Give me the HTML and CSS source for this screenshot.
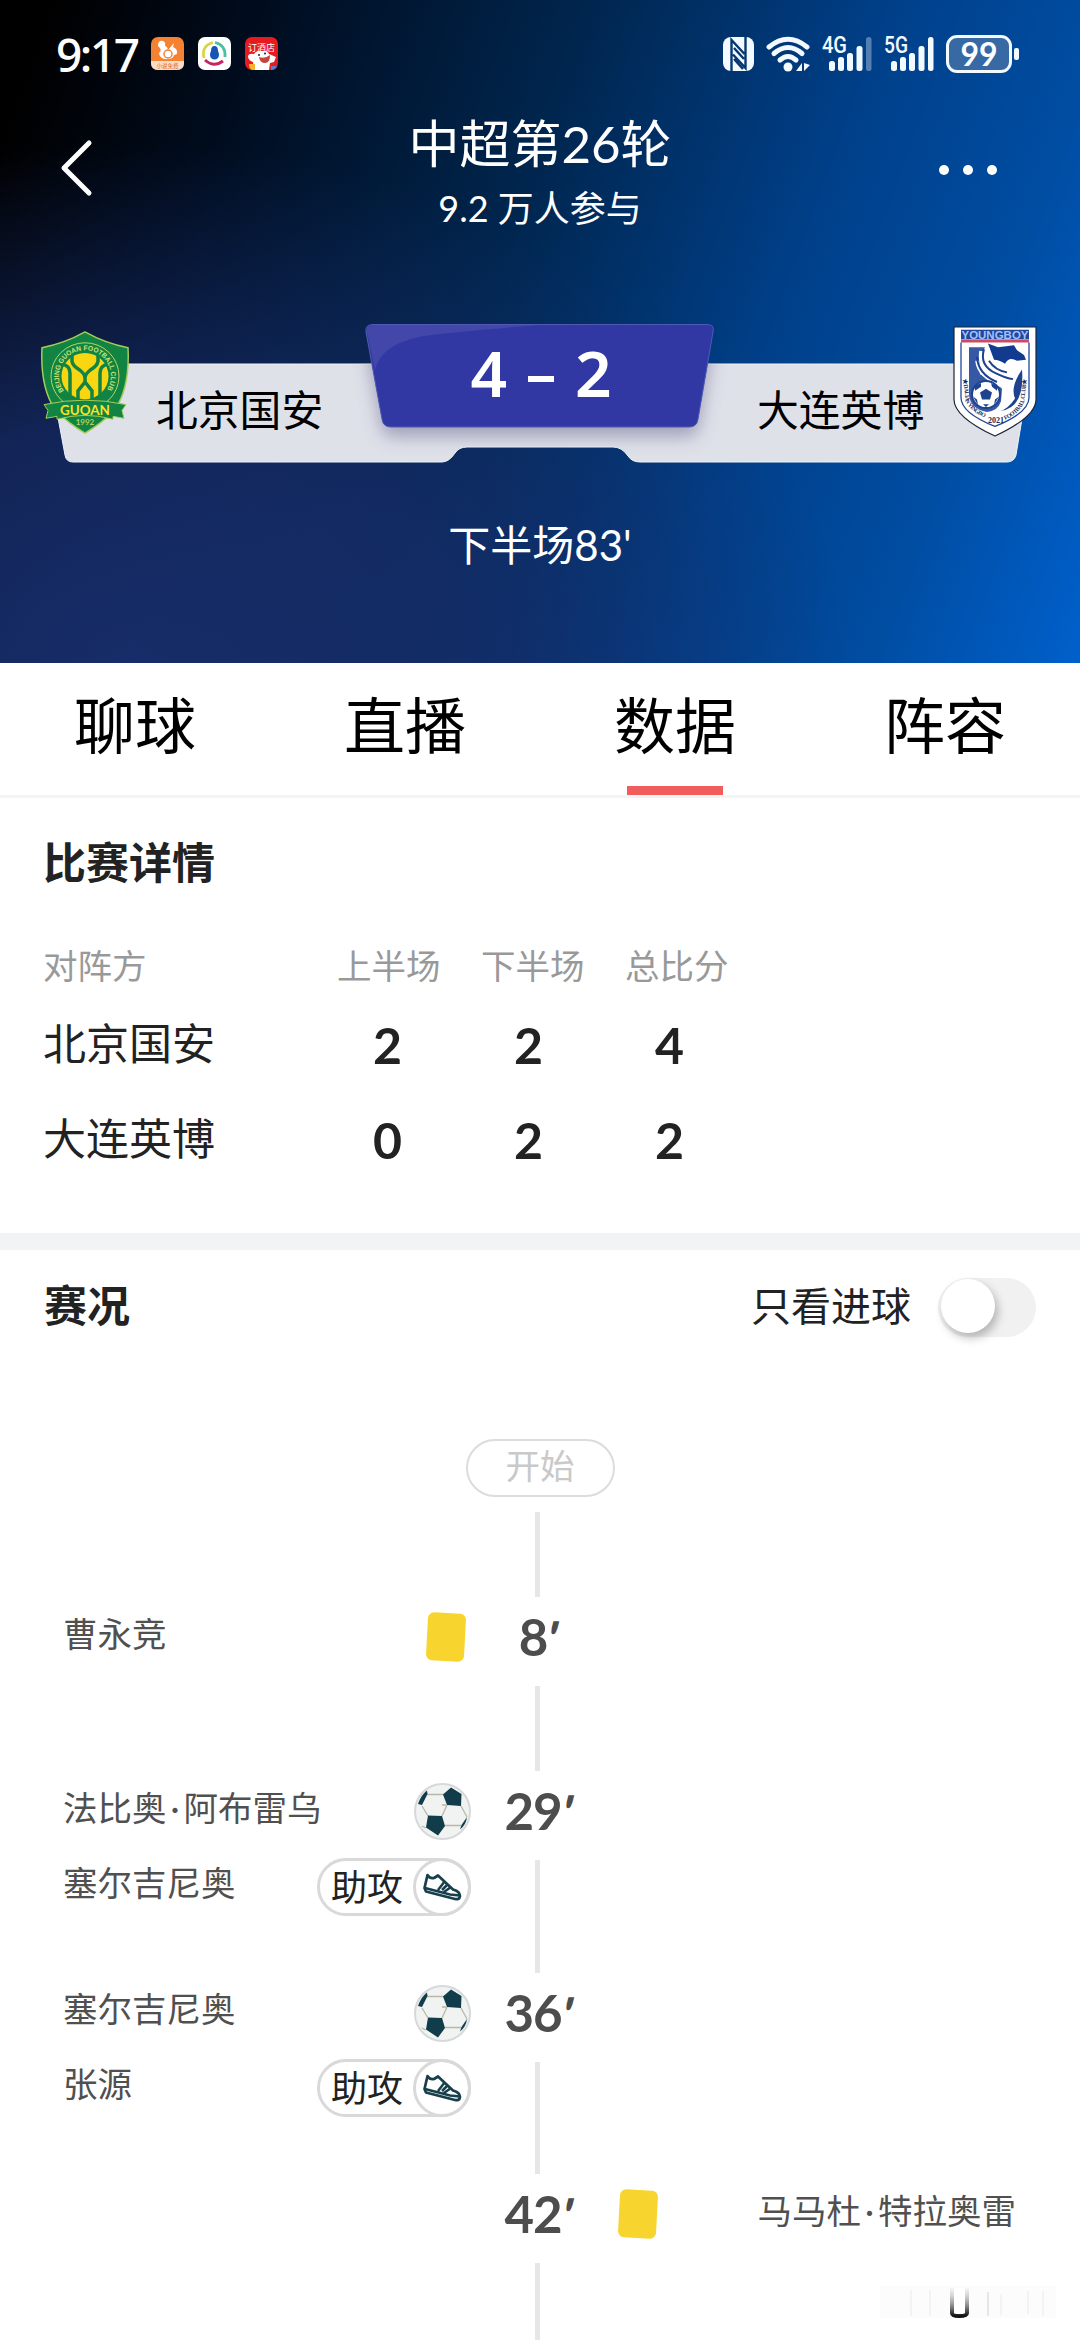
FILE: index.html
```html
<!DOCTYPE html>
<html lang="zh-CN">
<head>
    <meta charset="UTF-8">
    <meta name="viewport" content="width=device-width, initial-scale=1.0">
    <title>中超第26轮</title>
    <link rel="stylesheet" href="styles.css">
</head>
<body>
    <!-- símbolos reutilizados na linha do tempo -->
    <svg class="defs" width="0" height="0">
        <symbol id="ball" viewBox="0 0 57 57">
            <circle cx="28.5" cy="28.5" r="27.5" fill="#f1f3f3" stroke="#d6d8d9" stroke-width="2"/>
            <path d="M13 11.500H30M33 22L28 33M8 23L14 33M31 42.500H47M47 23L53 34M12 45L8 43M32 22H28" fill="none" stroke="#b9b7a5" stroke-width="1.300"/>
            <path d="M37 4.500L47.500 11L47 23L33 22L29 11.500Z" fill="#113c49"/>
            <path d="M14 32.500L28 33L31 43L24 52.500L12 44.500Z" fill="#113c49"/>
            <path d="M4 21Q7 12 13 7.500L13.500 11L8 22Z" fill="#113c49"/>
            <path d="M53 34Q52 42 46 46.500L47.500 42Z" fill="#113c49"/>
        </symbol>
        <symbol id="shoe" viewBox="0 0 40 30">
            <path d="M5.500 3Q8 7 12 6L16 3.500L31 17.500Q38 19.500 38 24Q37.500 28 33 27L4 19.500L2.500 16Z" fill="#fff" stroke="#173f4c" stroke-width="2.700" stroke-linejoin="round"/>
            <path d="M3 16L28 22.500L38 23.500M16 18L23 9M22 20L29 15M20 18L26 12" fill="none" stroke="#173f4c" stroke-width="2.500"/>
        </symbol>
    </svg>

    <header class="header">
        <div class="statusbar">
            <div class="status-left">
                <span class="clock">9:17</span>
                <svg class="app" viewBox="0 0 33 33">
                    <rect width="33" height="33" rx="7" fill="#f58232"/>
                    <path d="M0 24H33V26Q33 33 26 33H7Q0 33 0 26Z" fill="#fbdcc6"/>
                    <path d="M7 9Q7 3 12 4Q15 5 14 9Q16 9 17 13L23 6L22 10Q27 12 26 17L23 18Q22 22 17 22Q9 23 8 16Q12 13 7 9Z" fill="#fff"/>
                    <circle cx="17" cy="17" r="4" fill="none" stroke="#f58232" stroke-width="1.500"/>
                    <text x="16.500" y="31" text-anchor="middle" font-size="5.500" fill="#e06a24">小说免费</text>
                </svg>
                <svg class="app" viewBox="0 0 33 33">
                    <rect width="33" height="33" rx="7" fill="#fff"/>
                    <path d="M6 21Q3 9 15 5.500" fill="none" stroke="#d8d648" stroke-width="2.800"/>
                    <path d="M17 5.500Q28 8 27 20" fill="none" stroke="#4cc0a4" stroke-width="2.800"/>
                    <path d="M7 23Q16 31 25 24" fill="none" stroke="#c32762" stroke-width="3"/>
                    <path d="M16.500 9Q20 9 20 14Q22 18 20 21Q16.500 24 13 21Q11 18 13 14Q13 9 16.500 9Z" fill="#1655b4"/>
                </svg>
                <svg class="app" viewBox="0 0 33 33">
                    <rect width="33" height="33" rx="7" fill="#e61b20"/>
                    <text x="16.500" y="13.500" text-anchor="middle" font-size="9" fill="#fff">订酒店</text>
                    <path d="M3 20Q3 16 9 17Q12 13 17 14Q22 13 24 17L31 20L29 25L25 26L24 33H9L8 25Q4 24 3 20Z" fill="#fff"/>
                    <path d="M14 20Q20 22 25 18Q25 26 20 26Q15 26 14 20Z" fill="#c6443e"/>
                    <circle cx="14" cy="18" r="1" fill="#222"/><circle cx="20" cy="16.500" r="1" fill="#222"/>
                    <path d="M4 27H10V33H7Q4 32 4 27Z" fill="#f3b32f"/>
                    <path d="M26 29H32Q31 33 26 33Z" fill="#5d7cc4"/>
                </svg>
            </div>
            <div class="status-right">
                <svg width="31" height="34" viewBox="0 0 31 34">
                    <rect width="31" height="34" rx="8" fill="#f2f9ff"/>
                    <path d="M8.500 34V3L21.500 17M22.500 0V31L10 17.500M11 11L21 22M11 22L20 32" fill="none" stroke="#06386f" stroke-width="2.400"/>
                </svg>
                <svg class="wifi" width="44" height="36" viewBox="0 0 44 36">
                    <g fill="none" stroke="#f2f9ff" stroke-width="5" stroke-linecap="round">
                        <path d="M3 11Q22-4.500 41 11"/><path d="M8 17.500Q22 5.500 36 17.500"/><path d="M14 24Q22 17 30 24"/>
                    </g>
                    <circle cx="22" cy="31" r="4.500" fill="#f2f9ff"/>
                    <path d="M36 27V35H30ZM38 27V35L44 29Z" fill="#f2f9ff"/>
                </svg>
                <svg class="sig sig4" width="51" height="46" viewBox="0 -5 51 46">
                    <text class="net" x="0" y="17" textLength="25" lengthAdjust="spacingAndGlyphs">4G</text>
                    <g fill="#f2f9ff"><rect x="7" y="25" width="6" height="10" rx="2.500"/><rect x="16" y="21" width="6" height="14" rx="2.500"/><rect x="25" y="17" width="6" height="18" rx="2.500"/><rect x="34.500" y="10" width="6" height="25" rx="2.500"/><rect x="44" y="1" width="5.500" height="34" rx="2.500" opacity=".35"/></g>
                </svg>
                <svg class="sig sig5" width="51" height="46" viewBox="0 -5 51 46">
                    <text class="net" x="0" y="17" textLength="24" lengthAdjust="spacingAndGlyphs">5G</text>
                    <g fill="#f2f9ff"><rect x="7" y="25" width="6" height="10" rx="2.500"/><rect x="16" y="21" width="6" height="14" rx="2.500"/><rect x="25" y="17" width="6" height="18" rx="2.500"/><rect x="34.500" y="10" width="6" height="25" rx="2.500"/><rect x="44" y="1" width="5.500" height="34" rx="2.500"/></g>
                </svg>
                <span class="battery">99</span><i class="nub"></i>
            </div>
        </div>

        <div class="nav">
            <svg class="back" width="33" height="58" viewBox="0 0 33 58"><path d="M29 4L4 29L29 54" fill="none" stroke="#fff" stroke-width="5" stroke-linecap="round" stroke-linejoin="round"/></svg>
            <div class="nav-title">
                <h1>中超第26轮</h1>
                <p>9.2 万人参与</p>
            </div>
            <div class="more"><i></i><i></i><i></i></div>
        </div>

        <div class="scoreboard">
            <svg class="plate" width="1080" height="160" viewBox="0 0 1080 160">
                <defs>
                    <filter id="sh" x="-10%" y="-10%" width="120%" height="150%"><feDropShadow dx="0" dy="9" stdDeviation="9" flood-color="#4a4a78" flood-opacity=".45"/></filter>
                    <clipPath id="barclip"><path d="M48 40H1031L1016 131Q1014 138 1007 138H640Q632 138 628 132Q622 123 613 123H467Q459 123 455 129Q449 138 442 138H73Q66 138 65 131Z"/></clipPath>
                </defs>
                <path d="M48 40H1031L1016 131Q1014 138 1007 138H640Q632 138 628 132Q622 123 613 123H467Q459 123 455 129Q449 138 442 138H73Q66 138 65 131Z" fill="#dfe1e9" stroke="#edf3fa" stroke-width="1"/>
                <g clip-path="url(#barclip)"><path d="M373 0H707Q715 0 713 8L698 95Q697 103 689 103H391Q383 103 382 95L366 8Q365 0 373 0Z" fill="#3138a4" filter="url(#sh)"/></g>
                <path d="M373 .5H707Q715 .5 713 8L698 95Q697 103 689 103H391Q383 103 382 95L366 8Q365 .5 373 .5Z" fill="#3138a4" stroke="#5159b5" stroke-width="1"/>
                <path d="M373 1H540Q476 6 440 10Q382 15 375 46L367 8Q366 1 373 1Z" fill="#4247a9"/>
            </svg>
            <svg class="crest" width="90" height="104" viewBox="0 0 90 106" preserveAspectRatio="none">
                <path d="M45 1Q66 13 88 17Q90 57 75 80Q62 94 45 104Q28 94 15 80Q0 57 2 17Q24 13 45 1Z" fill="#118443" stroke="#a5cc57" stroke-width="1.500"/>
                <circle cx="45" cy="46" r="34" fill="#118443" stroke="#b9d65e" stroke-width="1"/>
                <circle cx="45" cy="46" r="23.500" fill="#f8d712"/>
                <path d="M32 20V31Q33 36 40 40Q45 44 45 48Q45 44 50 40Q57 36 58 31V20M22 34Q30 35 30 43V68M68 34Q60 35 60 43V68M45 46V53M38 70V61L45 52L52 61V70" fill="none" stroke="#118443" stroke-width="3.500"/>
                <path id="arc1" d="M24 61A26 26 0 1 1 66 61" fill="none"/>
                <text font-family="Liberation Sans" font-size="7" font-weight="700" fill="#cde477"><textPath href="#arc1" textLength="112" lengthAdjust="spacingAndGlyphs">BEIJING GUOAN FOOTBALL CLUB</textPath></text>
                <path d="M4 75Q45 66 86 75L82 81L84 89L73 87V90Q45 82 17 90V87L6 89L8 81Z" fill="#118443" stroke="#a5cc57" stroke-width="1"/>
                <text x="45" y="86" text-anchor="middle" font-size="14" font-weight="700" textLength="50" lengthAdjust="spacingAndGlyphs" fill="#f8e32a">GUOAN</text>
                <text x="45" y="96" text-anchor="middle" font-size="8" font-weight="700" fill="#b5d45c">1992</text>
            </svg>
            <span class="team home">北京国安</span>
            <span class="score"><b>4</b><i></i><b>2</b></span>
            <span class="team away">大连英博</span>
            <svg class="crest away-crest" width="84" height="112" viewBox="0 0 84 116" preserveAspectRatio="none">
                <path d="M1 1H83V76Q83 94 42 114Q1 94 1 76Z" fill="#fff" stroke="#1d2434" stroke-width="1.200"/>
                <path d="M8 4H76V14H8Z" fill="#21479c"/>
                <path d="M8 14.500H76V17H8Z" fill="#cc4b64"/>
                <text x="42" y="13" text-anchor="middle" font-family="Liberation Sans" font-size="11" font-weight="700" textLength="67" lengthAdjust="spacingAndGlyphs" fill="#a4c2ff">YOUNGBOY</text>
                <path d="M8 17V74Q8 90 42 104Q76 90 76 74V17" fill="none" stroke="#21479c" stroke-width="1.300"/>
                <path d="M16 22H32Q24 36 27 50L42 58L49 65L48 78Q45 88 34 89Q17 86 16 71Z" fill="#3658a5"/>
                <path d="M35 18L45 22L61 20L64 25L71 30L73 35L64 36Q56 31 52 39Q46 35 41 35Z" fill="#123b8f"/>
                <path d="M34 22Q29 41 44 48Q57 53 67 52M28 26Q25 46 44 55Q54 60 67 54M24 36Q25 52 49 62" fill="none" stroke="#fff" stroke-width="3.500"/>
                <path d="M31 24Q26 41 43 49Q53 54 60 55M24 32Q25 50 44 58M36 36Q42 46 54 48" fill="none" stroke="#1d438f" stroke-width="2"/>
                <path d="M69 45Q57 63 62 75Q55 86 47 88Q72 85 69 45Z" fill="#1d438f"/>
                <circle cx="33" cy="71" r="14" fill="#fff" stroke="#1d438f" stroke-width="2"/>
                <path d="M33 65L39 69L37 76H29L27 69ZM22 62L28 59L28 63L22 67ZM38 59L44 62L44 67L39 63ZM20 73L24 76L25 82ZM46 73L42 76L41 82ZM30 81H36L33 84Z" fill="#1d438f"/>
                <path id="arc2" d="M10 55L13 79Q20 91 36 96" fill="none"/>
                <path id="arc3" d="M52 97Q66 91 71 79L74 53" fill="none"/>
                <g font-family="Liberation Serif" font-size="6" font-weight="700" fill="#1d2a55">
                    <text><textPath href="#arc2" textLength="49">★DALIAN YINGBO</textPath></text>
                    <text x="35" y="100" font-size="8">2021</text>
                    <text><textPath href="#arc3" textLength="51">FOOTBALL CLUB★</textPath></text>
                </g>
            </svg>
        </div>
        <div class="period">下半场83'</div>
    </header>

    <nav class="tabs">
        <a>聊球</a>
        <a>直播</a>
        <a class="active">数据</a>
        <a>阵容</a>
    </nav>

    <section class="detail">
        <h2>比赛详情</h2>
        <div class="table">
            <div class="row head"><span>对阵方</span><span>上半场</span><span>下半场</span><span>总比分</span></div>
            <div class="row"><span>北京国安</span><b>2</b><b>2</b><b>4</b></div>
            <div class="row"><span>大连英博</span><b>0</b><b>2</b><b>2</b></div>
        </div>
    </section>

    <section class="events">
        <div class="events-head">
            <h2>赛况</h2>
            <span class="only-goals">只看进球</span>
            <span class="toggle"><i></i></span>
        </div>
        <div class="start">开始</div>
        <div class="line first"></div>

        <div class="event">
            <div class="side left">
                <div class="item"><span>曹永竞</span><i class="card"></i></div>
            </div>
            <div class="time"><b>8<em>'</em></b><i class="line"></i></div>
        </div>

        <div class="event tall">
            <div class="side left">
                <div class="item"><span>法比奥<em>·</em>阿布雷乌</span><svg class="ball"><use href="#ball"/></svg></div>
                <div class="item assist"><span>塞尔吉尼奥</span><div class="pill">助攻<i><svg><use href="#shoe"/></svg></i></div></div>
            </div>
            <div class="time"><b>29<em>'</em></b><i class="line"></i></div>
        </div>

        <div class="event tall">
            <div class="side left">
                <div class="item"><span>塞尔吉尼奥</span><svg class="ball"><use href="#ball"/></svg></div>
                <div class="item assist"><span>张源</span><div class="pill">助攻<i><svg><use href="#shoe"/></svg></i></div></div>
            </div>
            <div class="time"><b>36<em>'</em></b><i class="line"></i></div>
        </div>

        <div class="event">
            <div class="side left"></div>
            <div class="time"><b>42<em>'</em></b><i class="line"></i></div>
            <div class="side right">
                <div class="item"><i class="card"></i><span>马马杜<em>·</em>特拉奥雷</span></div>
            </div>
        </div>
    </section>

    <svg class="mark" width="176" height="36" viewBox="0 0 176 36">
        <defs><linearGradient id="fade" x1="0" y1="0" x2="0" y2="1"><stop offset="0" stop-color="#ccc" stop-opacity=".2"/><stop offset=".7" stop-color="#777"/><stop offset="1" stop-color="#111"/></linearGradient></defs>
        <rect width="176" height="32" fill="#fafafa" opacity=".6"/>
        <path d="M31 4V30M50 4V30M121 8V29M148 5V28M163 5V30" stroke="#f3f3f3" stroke-width="2"/>
        <path d="M108 6V30" stroke="#e6e6e6" stroke-width="2"/>
        <path d="M72 2V27Q72 30 79 30Q87 30 87 27V2" fill="#fff" stroke="url(#fade)" stroke-width="4"/>
    </svg>
</body>
</html>
```
FILE: styles.css
```css
* {
    box-sizing: border-box;
    margin: 0;
    padding: 0;
}

body {
    position: relative;
    width: 1080px;
    height: 2340px;
    overflow: hidden;
    background: #fff;
    color: #222;
    font-family: Lato, "Noto Sans CJK SC", sans-serif;
}

i, em {
    font-style: normal;
}

.defs {
    position: absolute;
}

/* topo */
.header {
    height: 663px;
    color: #fff;
    background:
        radial-gradient(ellipse 720px 520px at 130px 663px, rgba(24, 46, 108, .95) 0%, rgba(23, 44, 104, .8) 45%, rgba(18, 42, 98, 0) 100%),
        linear-gradient(110deg, #000 4%, #000c1e 20%, #00264f 45%, #00408a 68%, #004da2 84%, #0060cc 100%);
}

.statusbar {
    display: flex;
    justify-content: space-between;
    align-items: center;
    height: 107px;
    padding: 0 61px 0 56px;
}

.status-left, .status-right {
    display: flex;
    align-items: center;
}

.clock {
    width: 95px;
    font-family: "Noto Sans", sans-serif;
    font-size: 46px;
    font-weight: 500;
    line-height: 58px;
    letter-spacing: -2.5px;
}

.app {
    width: 33px;
    height: 33px;
    margin-right: 14px;
}

.wifi {
    margin-left: 12px;
}

.sig4 {
    margin-left: 12px;
}

.sig5 {
    margin-left: 11px;
}

.net {
    font-family: Roboto, sans-serif;
    font-size: 23px;
    font-weight: 500;
    fill: #f2f9ff;
}

.battery {
    width: 66px;
    height: 38px;
    margin-left: 11px;
    border: 3px solid #f2f9ff;
    border-radius: 11px;
    background: #376aa5;
    font-size: 32px;
    font-weight: 700;
    line-height: 31px;
    text-align: center;
}

.nub {
    width: 5px;
    height: 12px;
    margin-left: 2px;
    border-radius: 2px;
    background: #f2f9ff;
}

.nav {
    display: flex;
    justify-content: space-between;
    height: 128px;
    padding: 0 83px 0 60px;
}

.back {
    margin-top: 32px;
}

.nav-title {
    width: 400px;
    margin-left: 48px;
    text-align: center;
}

.nav-title h1 {
    font-size: 51px;
    font-weight: 400;
    line-height: 74px;
}

.nav-title p {
    font-size: 36px;
    line-height: 54px;
}

.more {
    display: flex;
    gap: 14px;
    margin-top: 58px;
}

.more i {
    width: 10px;
    height: 10px;
    border-radius: 50%;
    background: #fff;
}

.scoreboard {
    position: relative;
    display: flex;
    height: 138px;
    margin-top: 89px;
    padding-left: 40px;
}

.plate {
    position: absolute;
    left: 0;
    top: 0;
}

.crest {
    position: relative;
    margin-top: 7px;
}

.away-crest {
    margin: 2px 0 0 27px;
}

.team {
    position: relative;
    width: 169px;
    margin-top: 54px;
    color: #000;
    font-size: 41.800px;
    line-height: 64px;
}

.home {
    margin-left: 26px;
}

.away {
    margin-left: 59px;
}

.score {
    position: relative;
    display: flex;
    justify-content: center;
    align-items: center;
    gap: 21px;
    width: 314px;
    height: 98px;
    margin-left: 59px;
}

.score b {
    font-family: "Noto Sans", sans-serif;
    font-size: 64px;
    font-weight: 600;
    line-height: 98px;
}

.score i {
    width: 26px;
    height: 6px;
    margin-top: 12px;
    background: #fff;
}

.period {
    margin-top: 51px;
    font-size: 42px;
    line-height: 64px;
    text-align: center;
}

/* abas */
.tabs {
    display: grid;
    grid-template-columns: repeat(4, 1fr);
    height: 135px;
    border-bottom: 3px solid #f4f4f4;
}

.tabs a {
    display: flex;
    flex-direction: column;
    align-items: center;
    justify-content: space-between;
    color: #000;
    font-size: 61px;
    line-height: 126px;
}

.tabs .active::after {
    content: "";
    width: 96px;
    height: 9px;
    margin-top: -3px;
    background: #f15c5d;
}

h2 {
    font-size: 43px;
    font-weight: 700;
    line-height: 64px;
}

/* placar por tempo */
.detail {
    height: 452px;
    padding: 33px 43px 0;
    border-bottom: 17px solid #f2f3f5;
}

.table {
    margin-top: 41px;
}

.row {
    display: grid;
    grid-template-columns: 274px 141px 141px 141px;
    height: 95px;
    font-size: 43px;
    line-height: 95px;
}

.row b {
    font-size: 50px;
    font-weight: 700;
    line-height: 98px;
    text-align: center;
}

.row.head {
    grid-template-columns: 294px 144px 144px 144px;
    height: 60px;
    color: #999;
    font-size: 34.500px;
    line-height: 60px;
}

.events-head {
    display: flex;
    align-items: center;
    height: 114px;
    padding: 0 44px;
}

.events-head h2, .only-goals {
    margin-top: -3px;
}

.only-goals {
    margin-left: auto;
    font-size: 40px;
    line-height: 60px;
}

.toggle {
    width: 98px;
    height: 59px;
    margin-left: 27px;
    border-radius: 30px;
    background: #f1f1f1;
}

.toggle i {
    display: block;
    width: 54px;
    height: 54px;
    margin: 1px 3px;
    border-radius: 50%;
    background: #fff;
    box-shadow: 3px 5px 10px rgba(0, 0, 0, .26);
}

/* linha do tempo */
.start {
    width: 149px;
    height: 58px;
    margin: 75px auto 0;
    border: 2px solid #dcdcdc;
    border-radius: 29px;
    color: #c9c9c9;
    font-size: 34.500px;
    line-height: 49px;
    text-align: center;
}

.line {
    width: 5px;
    background: #e6e6e6;
}

.line.first {
    height: 85px;
    margin: 15px 0 0 535px;
}

.event {
    display: grid;
    grid-template-columns: 471px 133px 476px;
    height: 174px;
}

.event.tall {
    height: 201.500px;
}

.side.left {
    padding-left: 63px;
}

.side.right {
    padding-right: 64px;
}

.item {
    display: flex;
    align-items: center;
    justify-content: space-between;
    height: 81px;
    color: #505050;
    font-size: 34.500px;
    line-height: 50px;
}

.item span {
    padding-bottom: 8px;
}

.item em {
    display: inline-block;
    width: 17px;
    text-align: center;
}

.item.assist {
    height: 69px;
}

.time {
    display: flex;
    flex-direction: column;
    align-items: center;
}

.time b {
    height: 89px;
    padding-left: 5px;
    color: #4d4d4d;
    font-size: 51px;
    font-weight: 700;
    line-height: 79px;
    letter-spacing: -1px;
}

.time em {
    display: inline-block;
    width: 14px;
    font-size: 48px;
    font-weight: 900;
    transform: skewX(-14deg);
}

.time .line {
    flex: 1;
}

.card {
    width: 38px;
    height: 48px;
    margin: -1px 6px 0 15px;
    border-radius: 6px;
    background: #f8d52e;
    transform: rotate(3deg);
}

.ball {
    width: 57px;
    height: 57px;
}

.pill {
    display: flex;
    align-items: center;
    justify-content: space-between;
    width: 154px;
    height: 58px;
    padding-left: 11px;
    border: 3px solid #d9d9d9;
    border-radius: 29px;
    color: #222;
    font-size: 36px;
}

.pill i {
    display: flex;
    align-items: center;
    justify-content: center;
    width: 58px;
    height: 58px;
    margin-right: -3px;
    border: 3px solid #d9d9d9;
    border-radius: 50%;
}

.pill svg {
    width: 40px;
    height: 30px;
}

.mark {
    position: absolute;
    right: 24px;
    bottom: 18px;
}
```
